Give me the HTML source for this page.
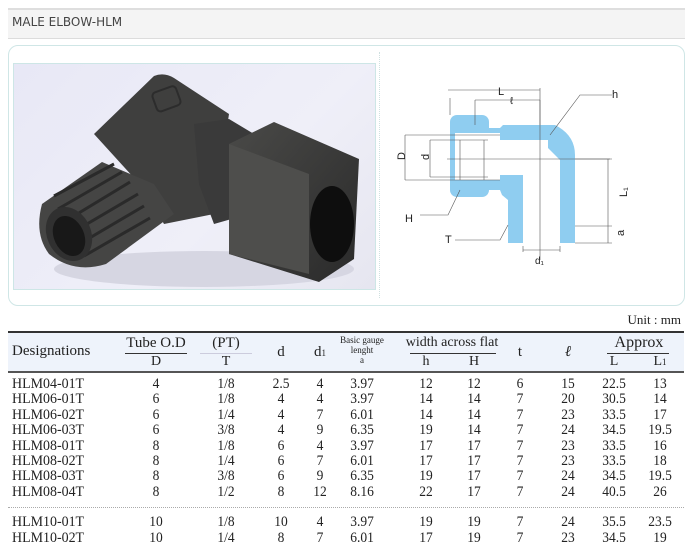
<!DOCTYPE html>
<html><head><meta charset="utf-8"><style>
*{margin:0;padding:0;box-sizing:border-box}
body{width:693px;height:548px;background:#fff;position:relative;overflow:hidden;font-family:"Liberation Serif",serif;color:#222}
.a{position:absolute}
.c{position:absolute;width:50px;text-align:center;font-size:14px;line-height:14px}
.r{position:absolute;left:0;width:693px;height:16px}
.r span{position:absolute;width:50px;text-align:center;font-size:15px;line-height:16px;transform:scaleX(.9)}
.r span.n{left:12px;width:auto;text-align:left;transform-origin:left;transform:scaleX(.93)}
</style></head><body>
<div class="a" style="left:8px;top:8px;width:677px;height:31px;background:#f4f4f4;border-top:2px solid #dedede;border-bottom:1px solid #dcdcdc"></div>
<div class="a" style="left:12px;top:15px;font-family:'DejaVu Sans',sans-serif;font-size:12px;color:#444">MALE ELBOW-HLM</div>
<div class="a" style="left:8px;top:45px;width:677px;height:261px;border:1px solid #cfe6e6;border-radius:10px"></div>
<div class="a" style="left:379px;top:52px;height:246px;border-left:1px dotted #cfe0e0"></div>
<div class="a" style="left:13px;top:63px;width:363px;height:227px;border:1px solid #cde6e6;background:linear-gradient(135deg,#e8e8f6,#efeff8 60%,#e6e6f0);overflow:hidden">
<svg width="363" height="227" viewBox="0 0 363 227">
<defs><linearGradient id="g" x1="0" y1="0" x2="1" y2="1"><stop offset="0" stop-color="#4a4a48"/><stop offset="1" stop-color="#2a2a2a"/></linearGradient></defs>
<ellipse cx="190" cy="205" rx="150" ry="18" fill="#d6d6e2"/>
<path d="M80 70 L140 12 Q150 8 160 14 L215 50 L200 150 L150 160 L130 125 Z" fill="#3f3f3e"/>
<path d="M28 140 L88 98 L140 120 L160 150 L92 200 Q60 210 35 190 Q20 170 28 140Z" fill="#454544"/>
<g stroke="#2a2a2a" stroke-width="3" fill="none"><path d="M40 132 L100 100"/><path d="M44 145 L108 108"/><path d="M50 158 L116 118"/><path d="M56 170 L124 130"/><path d="M62 182 L130 142"/><path d="M70 192 L136 154"/></g>
<ellipse cx="55" cy="170" rx="22" ry="28" fill="#303030" transform="rotate(-25 55 170)"/>
<ellipse cx="55" cy="172" rx="15" ry="21" fill="#181818" transform="rotate(-25 55 172)"/>
<path d="M180 60 L215 55 L240 70 L235 150 L200 160 L185 120Z" fill="#3a3a3a"/>
<path d="M215 80 L260 58 L345 95 L340 195 L305 218 L215 190 Z" fill="url(#g)"/>
<path d="M215 80 L295 110 L295 210 L215 190Z" fill="#4e4e4c"/>
<ellipse cx="318" cy="160" rx="22" ry="38" fill="#0e0e0e"/>
<rect x="140" y="25" width="25" height="20" rx="4" fill="none" stroke="#2c2c2c" stroke-width="2" transform="rotate(-20 152 35)"/>
</svg></div>
<svg class="a" style="left:380px;top:60px" width="305" height="245" viewBox="380 60 305 245" font-family="Liberation Sans,sans-serif" font-size="11" fill="#222">
<g fill="#8fcdf0">
<rect x="450" y="115" width="39" height="82" rx="7"/>
<path d="M486 128 L500 128 L503 125 L555 125 Q575 135 575 155 L575 243 L508 243 L508 200 L502 195 L500 190 L486 190Z"/>
</g>
<g fill="#fff">
<rect x="455" y="133" width="45" height="47"/>
<rect x="488" y="140" width="60" height="35"/>
<path d="M540 140 L560 160 L560 243 L523 243 L523 175 L488 175 L488 140Z"/>
</g>
<g stroke="#555" stroke-width=".6" fill="none">
<path d="M450 98 V115 M540 88 V125 M448 90 H540 M475 100 H540 M475 100 V125"/>
<path d="M405 135 H500 M405 180 H500 M405 135 V180 M430 140 V177 M430 140 H488 M430 177 H488"/>
<path d="M447 159 H610 M540 100 V260"/>
<path d="M575 159 H612 M608 159 V243 M575 226 H612 M575 243 H612"/>
<path d="M523 246 V252 M560 246 V252 M523 250 H560"/>
<path d="M550 135 L580 95 H612"/>
<path d="M460 190 L448 215 H420"/>
<path d="M508 225 L500 240 H455"/>
<path d="M460 140 V180 M484 140 V180"/>
</g>
<text x="498" y="95">L</text><text x="510" y="104" font-size="10">ℓ</text>
<text x="612" y="98">h</text><text x="405" y="222">H</text><text x="445" y="243">T</text>
<text x="535" y="264" font-size="10">d₁</text>
<text x="401" y="164" transform="rotate(-90 401 160)">D</text>
<text x="426" y="163" transform="rotate(-90 426 160)">d</text>
<text x="625" y="205" transform="rotate(-90 622 200)">L₁</text>
<text x="620" y="240" transform="rotate(-90 620 236)">a</text>
</svg>
<div class="a" style="right:12px;top:312px;font-size:13px">Unit : mm</div>
<div class="a" style="left:8px;top:331px;width:676px;height:42px;background:#eef3fb;border-top:2px solid #333;border-bottom:2px solid #555"></div>
<div class="a" style="left:12px;top:343px;font-size:15px">Designations</div>
<div class="c" style="left:121px;top:336px;width:70px;font-size:15px">Tube O.D</div>
<div class="a" style="left:125px;top:353px;width:62px;border-top:1px solid #333"></div>
<div class="c" style="left:131px;top:355px">D</div>
<div class="c" style="left:201px;top:336px;font-size:15px">(PT)</div>
<div class="a" style="left:200px;top:353px;width:52px;border-top:1px solid #ccd"></div>
<div class="c" style="left:201px;top:355px">T</div>
<div class="c" style="left:256px;top:345px;font-size:15px">d</div>
<div class="c" style="left:295px;top:345px;font-size:15px">d<span style="font-size:9px">1</span></div>
<div class="c" style="left:332px;top:335px;width:60px;font-size:9px;line-height:10px">Basic gauge<br>lenght<br>a</div>
<div class="c" style="left:405px;top:336px;width:94px;font-size:14px">width across flat</div>
<div class="a" style="left:410px;top:353px;width:86px;border-top:1px solid #333"></div>
<div class="c" style="left:401px;top:355px">h</div><div class="c" style="left:449px;top:355px">H</div>
<div class="c" style="left:495px;top:345px;font-size:15px">t</div>
<div class="c" style="left:543px;top:345px;font-size:15px;font-style:italic">ℓ</div>
<div class="c" style="left:604px;top:336px;width:70px;font-size:16px">Approx</div>
<div class="a" style="left:607px;top:353px;width:62px;border-top:1px solid #333"></div>
<div class="c" style="left:589px;top:355px">L</div><div class="c" style="left:635px;top:355px">L<span style="font-size:9px">1</span></div>

<div class="r" style="top:376px"><span class="n">HLM04-01T</span><span style="left:131px">4</span><span style="left:201px">1/8</span><span style="left:256px">2.5</span><span style="left:295px">4</span><span style="left:337px">3.97</span><span style="left:401px">12</span><span style="left:449px">12</span><span style="left:495px">6</span><span style="left:543px">15</span><span style="left:589px">22.5</span><span style="left:635px">13</span></div>
<div class="r" style="top:391.4px"><span class="n">HLM06-01T</span><span style="left:131px">6</span><span style="left:201px">1/8</span><span style="left:256px">4</span><span style="left:295px">4</span><span style="left:337px">3.97</span><span style="left:401px">14</span><span style="left:449px">14</span><span style="left:495px">7</span><span style="left:543px">20</span><span style="left:589px">30.5</span><span style="left:635px">14</span></div>
<div class="r" style="top:406.8px"><span class="n">HLM06-02T</span><span style="left:131px">6</span><span style="left:201px">1/4</span><span style="left:256px">4</span><span style="left:295px">7</span><span style="left:337px">6.01</span><span style="left:401px">14</span><span style="left:449px">14</span><span style="left:495px">7</span><span style="left:543px">23</span><span style="left:589px">33.5</span><span style="left:635px">17</span></div>
<div class="r" style="top:422.2px"><span class="n">HLM06-03T</span><span style="left:131px">6</span><span style="left:201px">3/8</span><span style="left:256px">4</span><span style="left:295px">9</span><span style="left:337px">6.35</span><span style="left:401px">19</span><span style="left:449px">14</span><span style="left:495px">7</span><span style="left:543px">24</span><span style="left:589px">34.5</span><span style="left:635px">19.5</span></div>
<div class="r" style="top:437.6px"><span class="n">HLM08-01T</span><span style="left:131px">8</span><span style="left:201px">1/8</span><span style="left:256px">6</span><span style="left:295px">4</span><span style="left:337px">3.97</span><span style="left:401px">17</span><span style="left:449px">17</span><span style="left:495px">7</span><span style="left:543px">23</span><span style="left:589px">33.5</span><span style="left:635px">16</span></div>
<div class="r" style="top:453px"><span class="n">HLM08-02T</span><span style="left:131px">8</span><span style="left:201px">1/4</span><span style="left:256px">6</span><span style="left:295px">7</span><span style="left:337px">6.01</span><span style="left:401px">17</span><span style="left:449px">17</span><span style="left:495px">7</span><span style="left:543px">23</span><span style="left:589px">33.5</span><span style="left:635px">18</span></div>
<div class="r" style="top:468.4px"><span class="n">HLM08-03T</span><span style="left:131px">8</span><span style="left:201px">3/8</span><span style="left:256px">6</span><span style="left:295px">9</span><span style="left:337px">6.35</span><span style="left:401px">19</span><span style="left:449px">17</span><span style="left:495px">7</span><span style="left:543px">24</span><span style="left:589px">34.5</span><span style="left:635px">19.5</span></div>
<div class="r" style="top:483.8px"><span class="n">HLM08-04T</span><span style="left:131px">8</span><span style="left:201px">1/2</span><span style="left:256px">8</span><span style="left:295px">12</span><span style="left:337px">8.16</span><span style="left:401px">22</span><span style="left:449px">17</span><span style="left:495px">7</span><span style="left:543px">24</span><span style="left:589px">40.5</span><span style="left:635px">26</span></div>
<div class="a" style="left:8px;top:507px;width:676px;border-top:1px dotted #aaa"></div>
<div class="r" style="top:514px"><span class="n">HLM10-01T</span><span style="left:131px">10</span><span style="left:201px">1/8</span><span style="left:256px">10</span><span style="left:295px">4</span><span style="left:337px">3.97</span><span style="left:401px">19</span><span style="left:449px">19</span><span style="left:495px">7</span><span style="left:543px">24</span><span style="left:589px">35.5</span><span style="left:635px">23.5</span></div>
<div class="r" style="top:530px"><span class="n">HLM10-02T</span><span style="left:131px">10</span><span style="left:201px">1/4</span><span style="left:256px">8</span><span style="left:295px">7</span><span style="left:337px">6.01</span><span style="left:401px">17</span><span style="left:449px">19</span><span style="left:495px">7</span><span style="left:543px">23</span><span style="left:589px">34.5</span><span style="left:635px">19</span></div>
</body></html>
